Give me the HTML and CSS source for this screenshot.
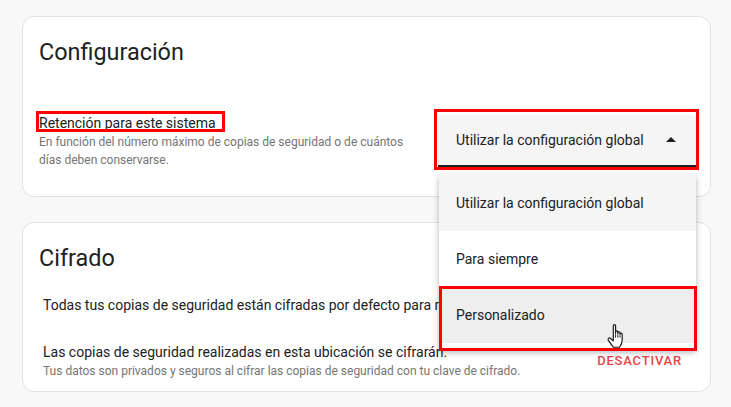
FILE: index.html
```html
<!DOCTYPE html>
<html lang="es">
<head>
<meta charset="utf-8">
<title>Configuración</title>
<link rel="stylesheet" href="styles.css">
</head>
<body>
<main class="page">
  <section class="card card-config">
    <h2 class="card-title">Configuración</h2>
    <div class="setting-row">
      <div class="setting-text">
        <div class="setting-label"><span class="mark mark-label">Retención para este sistema</span></div>
        <p class="setting-desc">En función del número máximo de copias de seguridad o de cuántos días deben conservarse.</p>
      </div>
      <div class="select-wrap">
        <div class="select-field mark mark-select">
          <span class="select-value">Utilizar la configuración global</span>
          <span class="select-arrow"></span>
        </div>
        <ul class="menu">
          <li class="menu-item is-selected">Utilizar la configuración global</li>
          <li class="menu-item">Para siempre</li>
          <li class="menu-item is-hover mark mark-item">Personalizado
            <svg class="cursor" width="20" height="26" viewBox="0 0 18 24">
              <path d="M6.5 2.6C6.5 1.2 8.6 1.2 8.6 2.6V9.6V8.2C8.6 6.9 10.7 6.9 10.7 8.2V10.2V9.2C10.7 7.9 12.7 7.9 12.7 9.2V10.8V10.4C12.7 9.1 14.7 9.1 14.7 10.4V16C14.7 19 13.3 21 12.3 22.4H6.8C5.3 20.6 3.4 18.4 1.9 15.8C1.2 14.5 2.4 13.3 3.6 14.1L6.5 16.4Z" fill="#fff" stroke="#1a1a1a" stroke-width="1.1" stroke-linejoin="round"/>
              <path d="M8.6 10.5V13.5M10.7 11V13.5M12.7 11.5V13.5" stroke="#1a1a1a" stroke-width="0.9" fill="none"/>
            </svg>
          </li>
        </ul>
      </div>
    </div>
  </section>

  <section class="card card-cipher">
    <h2 class="card-title">Cifrado</h2>
    <p class="cipher-line">Todas tus copias de seguridad están cifradas por defecto para mayor protección.</p>
    <div class="cipher-row">
      <div class="cipher-text">
        <p class="cipher-title">Las copias de seguridad realizadas en esta ubicación se cifrarán.</p>
        <p class="cipher-desc">Tus datos son privados y seguros al cifrar las copias de seguridad con tu clave de cifrado.</p>
      </div>
      <button class="text-button" type="button">Desactivar</button>
    </div>
  </section>
</main>
</body>
</html>
```

FILE: styles.css
```css
* {
  box-sizing: border-box;
}

html, body {
  margin: 0;
  padding: 0;
}

body {
  background: #f8f8f8;
  font-family: Roboto, "Noto Sans", Arial, sans-serif;
  color: #202124;
  width: 731px;
  height: 407px;
  overflow: hidden;
}

.page {
  padding: 16px 0 0 22px;
  display: flex;
  flex-direction: column;
  gap: 25px;
}

.card {
  width: 689px;
  background: #fff;
  border: 1px solid #e2e2e2;
  border-radius: 12px;
}

.card-config {
  position: relative;
  z-index: 2;
  padding: 19px 14px 27px 16px;
}

.card-cipher {
  position: relative;
  z-index: 1;
  padding: 19px 14px 11px 16px;
}

.card-title {
  margin: 0;
  font-size: 23.4px;
  line-height: 32px;
  font-weight: 400;
  color: #202124;
}

.setting-row {
  margin-top: 45px;
  display: flex;
  align-items: flex-start;
}

.setting-text {
  width: 380px;
}

.setting-label {
  font-size: 14px;
  line-height: 20px;
  color: #202124;
}

.setting-desc {
  margin: 0;
  font-size: 12px;
  line-height: 18px;
  color: #757575;
}

.mark {
  position: relative;
}

.mark::after {
  content: "";
  position: absolute;
  border: 3px solid #ff0000;
  pointer-events: none;
}

.mark-label::after {
  top: -4px;
  left: -3px;
  right: -9px;
  bottom: -1px;
}

.select-wrap {
  position: relative;
  margin-left: auto;
  margin-top: 2px;
  width: 258px;
}

.select-field {
  height: 52px;
  background: #f5f5f5;
  border-radius: 4px 4px 0 0;
  border-bottom: 2px solid #212121;
  display: flex;
  align-items: center;
  padding: 0 20px 0 18px;
  font-size: 14px;
  color: #202124;
}

.select-value {
  flex: 1;
}

.select-arrow {
  width: 0;
  height: 0;
  border-left: 5px solid transparent;
  border-right: 5px solid transparent;
  border-bottom: 5px solid #212121;
  margin-top: -1px;
}

.mark-select::after {
  top: -6px;
  left: -4px;
  right: -3px;
  bottom: -5px;
}

.menu {
  position: absolute;
  top: 60px;
  left: 1px;
  width: 257px;
  margin: 0;
  padding: 0 0 7px;
  list-style: none;
  background: #fff;
  box-shadow: 0 3px 5px rgba(0, 0, 0, 0.2), 0 1px 10px rgba(0, 0, 0, 0.1);
  border-radius: 0 0 4px 4px;
}

.menu-item {
  height: 56px;
  display: flex;
  align-items: center;
  padding-left: 17px;
  font-size: 14px;
  color: #202124;
}

.menu-item.is-selected {
  background: #f5f5f5;
}

.menu-item.is-hover {
  background: #eeeeee;
}

.mark-item::after {
  top: -1px;
  left: 0;
  right: -1px;
  bottom: -8px;
}

.cursor {
  position: absolute;
  left: 167px;
  top: 36px;
}

.cipher-line {
  margin: 21px 0 0 4px;
  font-size: 14px;
  line-height: 20px;
  color: #202124;
  white-space: nowrap;
}

.cipher-row {
  margin: 27px 0 0 4px;
  display: flex;
  align-items: center;
  padding-right: 6px;
}

.cipher-text {
  flex: 1;
}

.cipher-title {
  margin: 0;
  font-size: 14px;
  line-height: 20px;
  color: #202124;
}

.cipher-desc {
  margin: 0;
  font-size: 12px;
  line-height: 18px;
  color: #757575;
}

.text-button {
  background: none;
  border: 0;
  padding: 0 8px;
  font-family: inherit;
  font-size: 13px;
  font-weight: 500;
  letter-spacing: 0.8px;
  text-transform: uppercase;
  color: #e2474c;
  line-height: 20px;
}
```
